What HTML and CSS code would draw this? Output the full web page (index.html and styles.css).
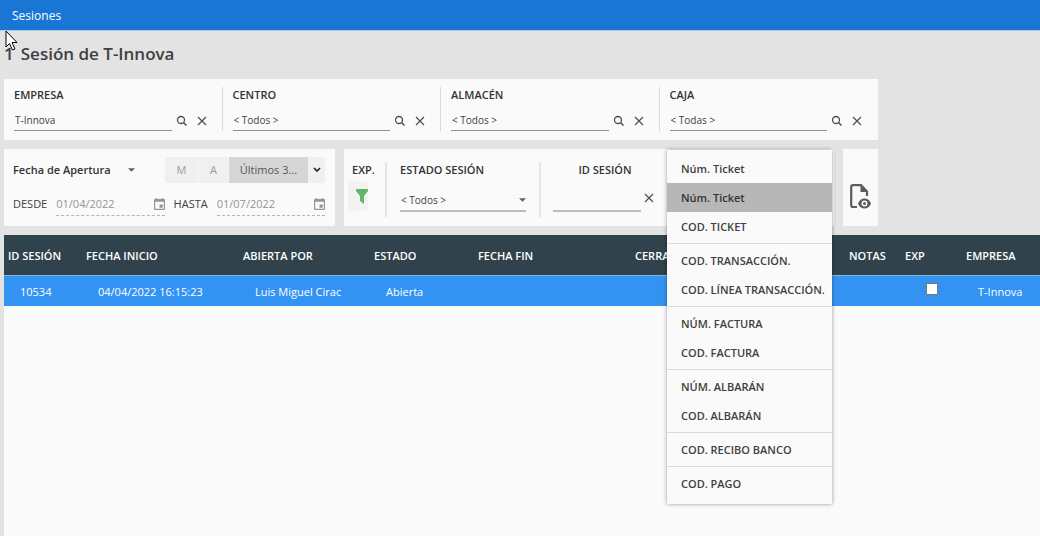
FILE: index.html
```html
<!DOCTYPE html>
<html lang="es">
<head>
<meta charset="utf-8">
<title>Sesiones</title>
<link rel="stylesheet" href="styles.css">
</head>
<body>
<svg class="symbols" width="0" height="0" aria-hidden="true">
  <symbol id="search" viewBox="0 0 12 12"><circle cx="5" cy="5" r="3.5" fill="none" stroke="currentColor" stroke-width="1.3"/><path d="M7.5 7.5 10.5 10.5" stroke="currentColor" stroke-width="1.5"/></symbol>
  <symbol id="close" viewBox="0 0 12 12"><path d="M2 2 10 10M10 2 2 10" stroke="currentColor" stroke-width="1.2"/></symbol>
  <symbol id="caret" viewBox="0 0 8 4"><path d="M0 0H8L4 4Z" fill="currentColor"/></symbol>
  <symbol id="calendar" viewBox="0 0 12 13"><path fill-rule="evenodd" d="M2 0H3.500V1H8.500V0H10V1H11Q12 1 12 2V12Q12 13 11 13H1Q0 13 0 12V2Q0 1 1 1H2ZM1.300 4V11.700H10.700V4ZM6 7H9.500V10.500H6Z" fill="currentColor"/></symbol>
</svg>

<header class="topbar">Sesiones</header>

<main class="page">
  <h1 class="title"><span>1</span><span>Sesión de T-Innova</span></h1>

  <section class="filters">
    <div class="card lookups">
      <div class="lookup">
        <label class="caption" for="empresa">EMPRESA</label>
        <div class="lookup-row">
          <input class="line-input" id="empresa" value="T-Innova">
          <button class="icon-button" aria-label="Buscar empresa"><svg class="icon"><use href="#search"/></svg></button>
          <button class="icon-button" aria-label="Borrar empresa"><svg class="icon"><use href="#close"/></svg></button>
        </div>
      </div>
      <div class="lookup">
        <label class="caption" for="centro">CENTRO</label>
        <div class="lookup-row">
          <input class="line-input" id="centro" value="&lt; Todos &gt;">
          <button class="icon-button" aria-label="Buscar centro"><svg class="icon"><use href="#search"/></svg></button>
          <button class="icon-button" aria-label="Borrar centro"><svg class="icon"><use href="#close"/></svg></button>
        </div>
      </div>
      <div class="lookup">
        <label class="caption" for="almacen">ALMACÉN</label>
        <div class="lookup-row">
          <input class="line-input" id="almacen" value="&lt; Todos &gt;">
          <button class="icon-button" aria-label="Buscar almacén"><svg class="icon"><use href="#search"/></svg></button>
          <button class="icon-button" aria-label="Borrar almacén"><svg class="icon"><use href="#close"/></svg></button>
        </div>
      </div>
      <div class="lookup">
        <label class="caption" for="caja">CAJA</label>
        <div class="lookup-row">
          <input class="line-input" id="caja" value="&lt; Todas &gt;">
          <button class="icon-button" aria-label="Buscar caja"><svg class="icon"><use href="#search"/></svg></button>
          <button class="icon-button" aria-label="Borrar caja"><svg class="icon"><use href="#close"/></svg></button>
        </div>
      </div>
    </div>

    <div class="filter-row">
      <div class="card dates">
        <div class="dates-top">
          <div class="select-wrap date-kind">
            <select class="select select-bold" aria-label="Tipo de fecha"><option>Fecha de Apertura</option></select>
            <svg class="caret"><use href="#caret"/></svg>
          </div>
          <div class="segments">
            <button class="segment segment-month">M</button>
            <button class="segment segment-year">A</button>
            <button class="segment segment-active">Últimos 3...</button>
            <button class="segment segment-more" aria-label="Más periodos"><svg width="8" height="6" viewBox="0 0 8 6"><path d="M1 1 4 4 7 1" fill="none" stroke="#222" stroke-width="1.700"/></svg></button>
          </div>
        </div>
        <div class="dates-bottom">
          <label for="desde">DESDE</label>
          <div class="date-box"><input id="desde" value="01/04/2022"><svg class="calendar"><use href="#calendar"/></svg></div>
          <label for="hasta">HASTA</label>
          <div class="date-box"><input id="hasta" value="01/07/2022"><svg class="calendar"><use href="#calendar"/></svg></div>
        </div>
      </div>

      <div class="card details">
        <div class="detail detail-exp">
          <span class="caption">EXP.</span>
          <button class="funnel" aria-label="Filtrar exportadas"><svg width="12" height="15" viewBox="0 0 12 15"><path d="M0 0H12V2L8 7V15L4 12V7L0 2Z" fill="#66b36a"/></svg></button>
        </div>
        <div class="detail detail-state">
          <label class="caption" for="estado">ESTADO SESIÓN</label>
          <div class="select-wrap state-select">
            <select class="select" id="estado"><option>&lt; Todos &gt;</option></select>
            <svg class="caret"><use href="#caret"/></svg>
          </div>
        </div>
        <div class="detail detail-id">
          <label class="caption" for="sesion">ID SESIÓN</label>
          <div class="id-row">
            <input class="line-input" id="sesion">
            <button class="icon-button" aria-label="Borrar ID"><svg class="icon"><use href="#close"/></svg></button>
          </div>
        </div>
        <div class="detail-ticket">
          <ul class="menu">
            <li><button class="menu-item">Núm. Ticket</button></li>
            <li><button class="menu-item menu-selected">Núm. Ticket</button></li>
            <li><button class="menu-item">COD. TICKET</button></li>
            <li class="menu-group"><button class="menu-item">COD. TRANSACCIÓN.</button></li>
            <li><button class="menu-item">COD. LÍNEA TRANSACCIÓN.</button></li>
            <li class="menu-group"><button class="menu-item">NÚM. FACTURA</button></li>
            <li><button class="menu-item">COD. FACTURA</button></li>
            <li class="menu-group"><button class="menu-item">NÚM. ALBARÁN</button></li>
            <li><button class="menu-item">COD. ALBARÁN</button></li>
            <li class="menu-group"><button class="menu-item">COD. RECIBO BANCO</button></li>
            <li class="menu-group"><button class="menu-item">COD. PAGO</button></li>
          </ul>
        </div>
      </div>

      <button class="card preview" aria-label="Vista previa">
        <svg width="21" height="25" viewBox="0 0 21 25"><path d="M7 23H3Q1.200 23 1.200 21V3Q1.200 1.200 3 1.200H11L17 7.500V12" fill="none" stroke="#5d5d5d" stroke-width="2.200"/><path d="M10.500 1V8H17Z" fill="#5d5d5d"/><path fill-rule="evenodd" d="M8 19.500Q10 14.500 14.500 14.500T21 19.500Q19 24.500 14.500 24.500T8 19.500ZM14.500 16.500A3 3 0 1 0 14.500 22.500A3 3 0 1 0 14.500 16.500Z" fill="#5d5d5d"/><circle cx="14.500" cy="19.500" r="1.500" fill="#5d5d5d"/></svg>
      </button>
    </div>
  </section>

  <section class="results">
    <table class="grid">
      <colgroup><col class="col-id"><col class="col-date"><col class="col-user"><col class="col-state"><col class="col-date"><col class="col-closed"><col class="col-notes"><col class="col-exp"><col class="col-company"></colgroup>
      <thead>
        <tr><th>ID SESIÓN</th><th>FECHA INICIO</th><th>ABIERTA POR</th><th>ESTADO</th><th>FECHA FIN</th><th>CERRADA</th><th>NOTAS</th><th>EXP</th><th>EMPRESA</th></tr>
      </thead>
      <tbody>
        <tr><td>10534</td><td>04/04/2022 16:15:23</td><td>Luis Miguel Cirac</td><td>Abierta</td><td></td><td></td><td></td><td class="cell-check"><input type="checkbox" class="check" aria-label="Exportada"></td><td>T-Innova</td></tr>
      </tbody>
    </table>
  </section>
</main>

<svg class="pointer" width="13" height="21" viewBox="0 0 13 21" aria-hidden="true"><path d="M1 1V17L4.500 13.500L7.500 20L10 19L7 12.500H12Z" fill="#fff" stroke="#000"/></svg>
</body>
</html>
```
FILE: styles.css
```css
* { box-sizing: border-box; }

body {
  display: flex;
  flex-direction: column;
  min-height: 100vh;
  margin: 0;
  background: #e3e3e3;
  color: #404040;
  font: 11px/16px "Open Sans", "Noto Sans", sans-serif;
}

button, input, select {
  margin: 0;
  padding: 0;
  border: 0;
  background: none;
  color: inherit;
  font: inherit;
}

.symbols { position: absolute; }

.topbar {
  padding: 8px 12px 6px;
  border-bottom: 1px solid #a9cbee;
  background: #1976d4;
  color: #fff;
  font-size: 12px;
}

.page {
  display: flex;
  flex: 1;
  flex-direction: column;
  padding-left: 4px;
}

.title {
  display: flex;
  gap: 7px;
  margin: 11px 0 13px;
  font-size: 17px;
  font-weight: 600;
  line-height: 24px;
}

.filters {
  display: flex;
  flex-direction: column;
  gap: 9px;
  max-width: 874px;
}

.card { background: #fafafa; }

.caption {
  color: #333;
  font-size: 11px;
  font-weight: 600;
  white-space: nowrap;
}

.lookups {
  display: grid;
  grid-template-columns: repeat(4, 1fr);
  padding: 8px 0 9px;
}

.lookup {
  padding: 0 10px;
  border-right: 1px solid #d9d9d9;
}

.lookup:last-child { border-right-color: transparent; }

.lookup .caption { display: block; }

.lookup-row {
  display: flex;
  align-items: flex-end;
  height: 28px;
}

.line-input {
  flex: 1;
  min-width: 0;
  height: 22px;
  padding-left: 1px;
  border-bottom: 1px solid #8f8f8f;
  font-size: 10px;
}

.icon-button {
  display: grid;
  flex: none;
  place-items: center;
  width: 20px;
  height: 20px;
  color: #4d4d4d;
}

.icon { width: 12px; height: 12px; }

.filter-row {
  display: grid;
  grid-template-columns: 331fr 490fr 35px;
  gap: 9px;
}

.dates {
  display: flex;
  flex-direction: column;
  gap: 8px;
  padding: 8px 10px 9px 9px;
}

.dates-top, .dates-bottom {
  display: flex;
  align-items: center;
  justify-content: space-between;
}

.dates-bottom {
  gap: 9px;
  height: 26px;
}

.select-wrap { display: grid; align-items: center; }

.select {
  grid-area: 1 / 1;
  width: 100%;
  height: 20px;
  appearance: none;
}

.select-bold { color: #333; font-weight: 600; }

.caret {
  grid-area: 1 / 1;
  justify-self: end;
  width: 7px;
  height: 4px;
  color: #606060;
  pointer-events: none;
}

.date-kind { width: 122px; }

.segments {
  display: flex;
  height: 26px;
  border-radius: 3px;
  background: #f0f0f0;
  overflow: hidden;
}

.segment {
  display: grid;
  place-items: center;
  border-right: 1px solid #f7f7f7;
  color: #9c9c9c;
}

.segment-month { width: 34px; }
.segment-year { width: 30px; }
.segment-active { width: 79px; border-right: 0; background: #d6d6d6; color: #555; }
.segment-more { width: 17px; border-right: 0; }

.date-box {
  display: flex;
  flex: 1;
  align-items: center;
  height: 24px;
  border-bottom: 1px dashed #b5b5b5;
  color: #959595;
}

.date-box input { flex: 1; width: 0; min-width: 0; }

.calendar { flex: none; width: 11px; height: 12px; }

.details {
  display: flex;
  padding: 13px 0 9px;
}

.detail {
  display: flex;
  flex-direction: column;
  border-right: 2px solid #e6e6e6;
}

.detail-exp {
  flex: none;
  align-items: flex-start;
  gap: 3px;
  width: 43px;
  padding-left: 4px;
}

.detail-exp .caption { padding-left: 4px; }

.funnel {
  display: grid;
  place-items: center end;
  width: 20px;
  height: 30px;
  border-radius: 3px;
  background: #f2f2f2;
}

.detail-state {
  flex: 1 1 154px;
  gap: 12px;
  padding: 0 13px;
}

.state-select {
  padding-left: 1px;
  border-bottom: 2px solid #bdbdbd;
  font-size: 10px;
}

.detail-id {
  flex: none;
  gap: 12px;
  width: 126px;
  padding: 0 10px 0 12px;
  border-right: 0;
}

.detail-id .caption { text-align: center; }

.id-row { display: flex; }

.id-row .line-input { border-bottom: 2px solid #bdbdbd; }

.id-row .icon-button { width: 16px; height: 16px; }

.detail-ticket {
  position: relative;
  flex: none;
  width: 167px;
}

.menu {
  position: absolute;
  z-index: 2;
  top: -12px;
  left: 0;
  width: 165px;
  margin: 0;
  padding: 4px 0 6px;
  background: #fafafa;
  box-shadow: 0 0 4px rgba(0, 0, 0, .4);
  list-style: none;
}

.menu-group {
  margin-top: 2px;
  padding-top: 2px;
  border-top: 1px solid #dadada;
}

.menu-item {
  display: block;
  width: 100%;
  height: 29px;
  padding-left: 14px;
  font-weight: 600;
  text-align: left;
  white-space: nowrap;
}

.menu-selected { background: #b7b7b7; color: #333; }

.preview {
  display: grid;
  place-items: center;
  padding-top: 18px;
}

.results {
  flex: 1;
  margin-top: 9px;
  background: #fafafa;
}

.grid {
  width: 100%;
  border-collapse: collapse;
  table-layout: fixed;
  color: #fff;
}

.grid th {
  height: 40px;
  padding: 3px 0 0 4px;
  background: #30434c;
  font-weight: 600;
  text-align: left;
  white-space: nowrap;
}

.grid td {
  height: 31px;
  padding: 2px 0 0 16px;
  border-top: 1px solid #8ab4dc;
  background: #3393f2;
  white-space: nowrap;
}

.col-id, .col-company { width: 78px; }
.col-date { width: 157px; }
.col-user { width: 131px; }
.col-state { width: 104px; }
.col-closed { width: 214px; }
.col-notes { width: 56px; }
.col-exp { width: 61px; }

.grid .cell-check { padding: 0; text-align: center; }

.check {
  width: 12px;
  height: 12px;
  border: 1px solid #777;
  background: #fff;
  appearance: none;
}

.pointer {
  position: absolute;
  z-index: 3;
  top: 30px;
  left: 5px;
}
```
